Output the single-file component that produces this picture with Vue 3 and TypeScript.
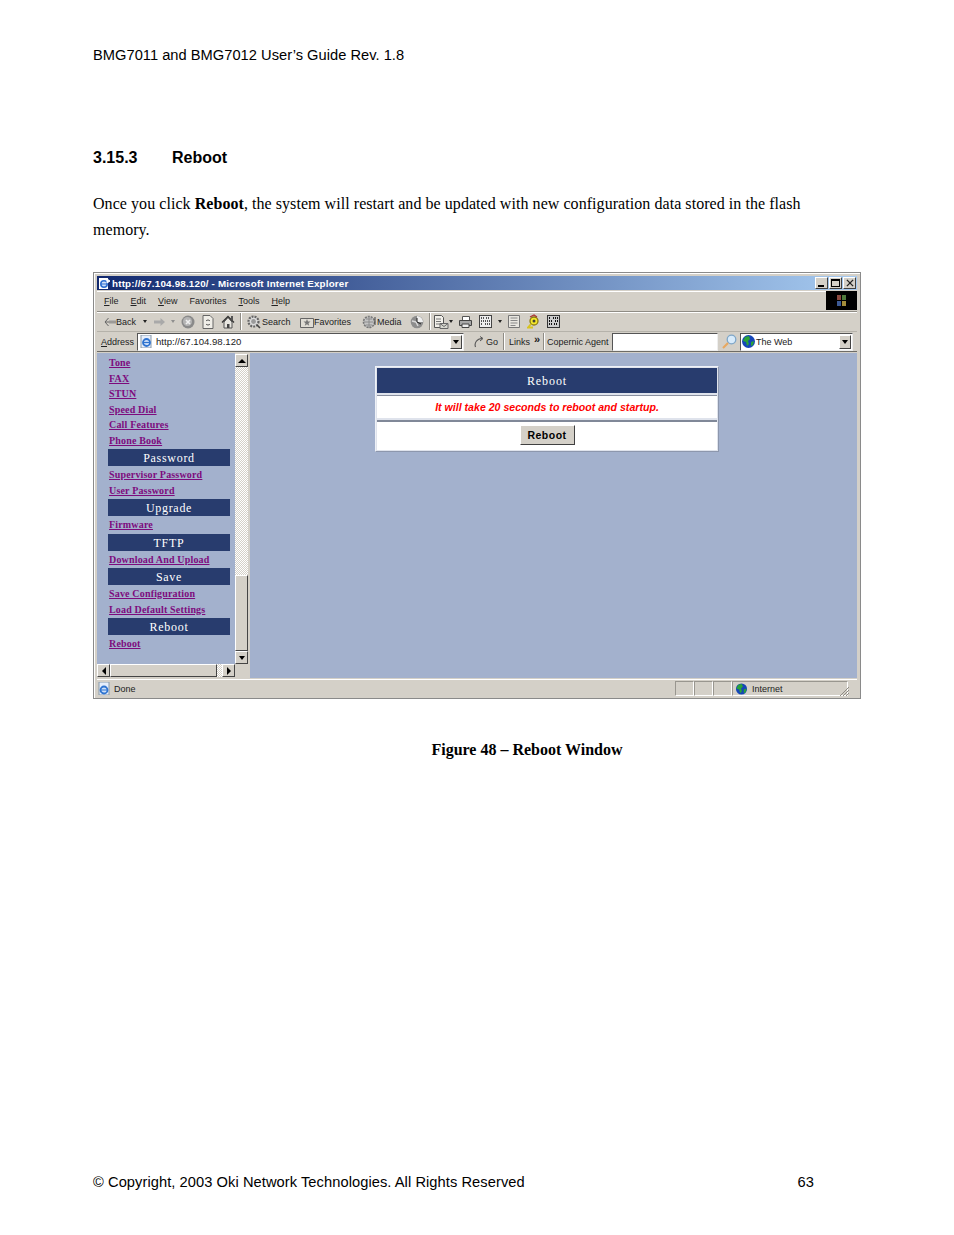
<script setup lang="ts">
interface NavItem { label: string; bar?: boolean }
const nav: NavItem[] = [
  { label: 'Tone' }, { label: 'FAX' }, { label: 'STUN' }, { label: 'Speed Dial' },
  { label: 'Call Features' }, { label: 'Phone Book' }, { label: 'Password', bar: true },
  { label: 'Supervisor Password' }, { label: 'User Password' }, { label: 'Upgrade', bar: true },
  { label: 'Firmware' }, { label: 'TFTP', bar: true }, { label: 'Download And Upload' },
  { label: 'Save', bar: true }, { label: 'Save Configuration' }, { label: 'Load Default Settings' },
  { label: 'Reboot', bar: true }, { label: 'Reboot' }
]
const menus = [
  { k: 'F', r: 'ile' }, { k: 'E', r: 'dit' }, { k: 'V', r: 'iew' },
  { k: '', r: 'Favorites' }, { k: 'T', r: 'ools' }, { k: 'H', r: 'elp' }
]
</script>

<template>
  <div class="page">
    <header class="running">BMG7011 and BMG7012 User’s Guide Rev. 1.8</header>
    <h2 class="heading"><span class="num">3.15.3</span><span>Reboot</span></h2>
    <p class="para">Once you click <b>Reboot</b>, the system will restart and be updated with new configuration data stored in the flash memory.</p>

    <div class="window">
      <div class="title">
        <svg class="t-ico" width="13" height="13" viewBox="0 0 13 13"><rect x="1" y="1" width="9" height="11" fill="#fff"/><circle cx="6" cy="7" r="3.200" fill="#cfe0f8" stroke="#2f6fd0" stroke-width="1.600"/><path d="M3 7h6" stroke="#2f6fd0"/><path d="M9 2l3 2-3 2z" fill="#fff" stroke="#fff"/></svg>
        <span class="t-text">http://67.104.98.120/ - Microsoft Internet Explorer</span>
        <div class="t-btns">
          <span class="wbtn"><i class="w-min"></i></span>
          <span class="wbtn"><i class="w-max"></i></span>
          <span class="wbtn w-x">
            <svg width="8" height="8" viewBox="0 0 9 9"><path d="M1 1l7 7M8 1l-7 7" stroke="#222" stroke-width="1.500"/></svg>
          </span>
        </div>
      </div>

      <div class="menubar">
        <span v-for="m in menus" :key="m.r" class="menu"><u>{{ m.k }}</u>{{ m.r }}</span>
        <div class="flag">
          <svg width="14" height="13" viewBox="0 0 14 13"><rect x="2" y="1" width="4" height="5" fill="#8c4a40"/><rect x="7" y="1" width="4" height="5" fill="#4f7a3c"/><rect x="2" y="7" width="4" height="5" fill="#3c5a95"/><rect x="7" y="7" width="4" height="5" fill="#a48d3a"/></svg>
        </div>
      </div>

      <div class="toolbar">
        <svg class="ti back" width="12" height="10" viewBox="0 0 12 10"><path d="M4.500 1L1 5l3.500 4M1 5h11" fill="none" stroke="#666" stroke-width="1"/><path d="M5 3.800h7M5 6.200h7" stroke="#999" stroke-width=".7"/></svg>
        <span class="tl l-back">Back</span>
        <i class="caret c1"></i>
        <svg class="ti fwd" width="11" height="10" viewBox="0 0 11 10"><path d="M11 5L6.500 1v2.500H0v3h6.500V9z" fill="#a9a9a9"/></svg>
        <i class="caret c2"></i>
        <svg class="ti stop" width="14" height="14" viewBox="0 0 14 14"><circle cx="7" cy="7" r="6.500" fill="#8a8a8a"/><circle cx="6.500" cy="6.500" r="4.500" fill="#b5b5b5"/><path d="M5 5l4 4M9 5l-4 4" stroke="#f0f0f0" stroke-width="1.600"/></svg>
        <svg class="ti refresh" width="12" height="14" viewBox="0 0 12 14"><path d="M1 .5h7l3 3v10H1z" fill="#f0eee8" stroke="#666"/><path d="M4 6a2.500 2.500 0 0 1 4 0M8 9a2.500 2.500 0 0 1-4 0" stroke="#555" fill="none"/></svg>
        <svg class="ti home" width="14" height="14" viewBox="0 0 14 14"><path d="M3 7v6h8V7L7 2.500z" fill="#e8e6e0" stroke="#555"/><path d="M1 7.500l6-6 6 6" fill="none" stroke="#333" stroke-width="1.300"/><rect x="6" y="9" width="2.500" height="4" fill="#444"/><rect x="10" y="1" width="2" height="4" fill="#555"/></svg>
        <i class="sep s1"></i>
        <svg class="ti search" width="14" height="14" viewBox="0 0 14 14"><circle cx="6.500" cy="6.500" r="5" fill="#dcdcdc" stroke="#666" stroke-width="2.200" stroke-dasharray="2 1"/><circle cx="6.500" cy="6.500" r="2.400" fill="#9a9a9a"/><path d="M10 10l3 3" stroke="#444" stroke-width="1.600"/></svg>
        <span class="tl l-search">Search</span>
        <svg class="ti fav" width="14" height="13" viewBox="0 0 14 13"><path d="M.5 3.500h13v9H.5z" fill="#e0ddd5" stroke="#666"/><path d="M7 4l1 2.400 2.500.2-2 1.600.7 2.500L7 9.300l-2.200 1.400.7-2.500-2-1.600L6 6.400z" fill="#777"/></svg>
        <span class="tl l-fav">Favorites</span>
        <svg class="ti media" width="15" height="14" viewBox="0 0 15 14"><circle cx="7" cy="7" r="5.500" fill="#c4c4c4" stroke="#777" stroke-width="1.600" stroke-dasharray="2 1"/><path d="M4 4h6M2 7h9M4 10h6M7 1v12" stroke="#888" stroke-width=".9"/><path d="M13 2v8" stroke="#444"/></svg>
        <span class="tl l-media">Media</span>
        <svg class="ti hist" width="14" height="14" viewBox="0 0 14 14"><circle cx="7" cy="7" r="6.300" fill="#8d8d8d"/><path d="M7 1a6 6 0 0 1 6 6H7z" fill="#f0f0f0"/><path d="M2 6l4 1 2 4" stroke="#d8d8d8" stroke-width="1.500" fill="none"/><path d="M7 3v4l4 2" stroke="#222" fill="none"/></svg>
        <i class="sep s2"></i>
        <svg class="ti mail" width="15" height="14" viewBox="0 0 15 14"><path d="M.5.5h7l2 2v10H.5z" fill="#f2f0ea" stroke="#555"/><path d="M2 4h5M2 6.500h5M2 9h4" stroke="#777"/><path d="M6 8.500h8v5H6z" fill="#d8d8d0" stroke="#666"/><path d="M6 8.500l4 3 4-3" fill="none" stroke="#666"/></svg>
        <i class="caret c3"></i>
        <svg class="ti print" width="13" height="12" viewBox="0 0 13 12"><path d="M3.500.5h7v4h-7z" fill="#fff" stroke="#555"/><path d="M.5 4.500h12v5H.5z" fill="#a8a8a8" stroke="#444"/><path d="M3 8h7v3.500H3z" fill="#eee" stroke="#444"/></svg>
        <svg class="ti edit" width="13" height="13" viewBox="0 0 13 13"><rect x=".5" y=".5" width="12" height="12" fill="#eee" stroke="#444"/><path d="M2 3h3M7 3h4M2 6h9M2 9h2M6 9h5" stroke="#222" stroke-width="1.500" stroke-dasharray="1 1"/></svg>
        <i class="caret c4"></i>
        <svg class="ti disc" width="12" height="13" viewBox="0 0 12 13"><path d="M.5.5h11v12H.5z" fill="#e8e6e0" stroke="#777"/><path d="M2.500 3h7M2.500 5.500h7M2.500 8h7M2.500 10.500h5" stroke="#888"/></svg>
        <svg class="ti gold" width="13" height="15" viewBox="0 0 13 15"><circle cx="7" cy="7" r="4" fill="#f4e82a" stroke="#8a7a10" stroke-width="1.300"/><circle cx="7" cy="7" r="1.500" fill="#443"/><path d="M4 10l-3 3.500h5" stroke="#d8c420" stroke-width="1.800" fill="none"/><path d="M3 3l4-2 3 2" stroke="#a33" stroke-width="1.200" fill="none"/></svg>
        <svg class="ti msn" width="13" height="13" viewBox="0 0 13 13"><rect x=".5" y=".5" width="12" height="12" fill="#ccc" stroke="#333"/><path d="M2 3h2M6 3h5M2 6h4M8 6h3M2 9h3M7 9h4" stroke="#111" stroke-width="2" stroke-dasharray="1 1"/></svg>
      </div>

      <div class="addrbar">
        <span class="tl l-addr"><u>A</u>ddress</span>
        <div class="combo c-addr">
          <svg class="ie" width="13" height="13" viewBox="0 0 13 13"><rect x="1" y="0" width="10" height="13" fill="#e6eefb" stroke="#89a"/><circle cx="6.500" cy="7.500" r="3.500" fill="#cfe0f8" stroke="#2f74d0" stroke-width="1.800"/><path d="M3 7.500h7" stroke="#2f74d0" stroke-width="1.200"/></svg>
          <span class="url">http://67.104.98.120</span>
          <span class="drop"><i class="down"></i></span>
        </div>
        <svg class="ti go" width="11" height="12" viewBox="0 0 11 12"><path d="M1.500 11C0 7 3 2.500 8 2.500" stroke="#555" fill="none" stroke-width="1.100"/><path d="M6 .5l3 2-3 2.500" stroke="#555" fill="none"/></svg>
        <span class="tl l-go">Go</span>
        <i class="sep s3"></i>
        <span class="tl l-links">Links</span>
        <span class="chev">»</span>
        <i class="sep s4"></i>
        <span class="tl l-cop">Copernic Agent</span>
        <div class="c-input"></div>
        <svg class="ti mag" width="15" height="15" viewBox="0 0 15 15"><circle cx="9.500" cy="5.500" r="4.300" fill="#d8ebfb" stroke="#7ea6c8" stroke-width="1.300"/><path d="M6 9l-5 5" stroke="#e8a860" stroke-width="2.200"/></svg>
        <div class="combo c-web">
          <svg class="globe" width="13" height="13" viewBox="0 0 13 13"><circle cx="6.500" cy="6.500" r="6.500" fill="#1546b8"/><path d="M3 2l4-1 1 3-2 2 1 3-2 2-1-4-3-1zM9 7l3-1-1 4-2 1z" fill="#2aa338"/></svg>
          <span class="web">The Web</span>
          <span class="drop"><i class="down"></i></span>
        </div>
      </div>

      <div class="client">
        <aside class="frame">
          <div class="frame-top">
            <nav class="nav">
              <template v-for="(n, i) in nav" :key="i">
                <div v-if="n.bar" class="bar">{{ n.label }}</div>
                <a v-else class="link">{{ n.label }}</a>
              </template>
            </nav>
            <div class="vscroll">
              <span class="sb"><i class="up"></i></span>
              <span class="dither dv"></span>
              <span class="thumb tv"></span>
              <span class="sb"><i class="down"></i></span>
            </div>
          </div>
          <div class="frame-bottom">
            <div class="hscroll">
              <span class="sb"><i class="left"></i></span>
              <span class="thumb th"></span>
              <span class="dither dh"></span>
              <span class="sb"><i class="right"></i></span>
            </div>
            <span class="corner"></span>
          </div>
        </aside>
        <main class="main">
          <div class="panel">
            <div class="p-head cell">Reboot</div>
            <div class="p-msg cell"><em>It will take 20 seconds to reboot and startup.</em></div>
            <div class="p-act cell"><button class="btn" type="button">Reboot</button></div>
          </div>
        </main>
      </div>

      <div class="status">
        <svg class="st-ico" width="13" height="13" viewBox="0 0 13 13"><rect x="1" y="0" width="10" height="13" fill="#e6eefb" stroke="#89a"/><circle cx="6" cy="8" r="3.500" fill="#cfe0f8" stroke="#2f74d0" stroke-width="1.800"/><path d="M3 8h6" stroke="#2f74d0"/></svg>
        <span class="st-done">Done</span>
        <span class="st-cell w1"></span>
        <span class="st-cell w1"></span>
        <span class="st-cell w1"></span>
        <span class="st-zone">
          <svg width="13" height="12" viewBox="0 0 13 13"><circle cx="6.500" cy="6.500" r="6" fill="#1546b8"/><path d="M3 2l4-1 1 3-2 2 1 3-2 2-1-4-3-1zM9 7l3-1-1 4-2 1z" fill="#2aa338"/></svg>
          <span>Internet</span>
        </span>
        <svg class="grip" width="11" height="11" viewBox="0 0 11 11"><path d="M10 1L1 10M10 4l-6 6M10 7l-3 3" stroke="#8d8a83"/></svg>
      </div>
    </div>

    <p class="caption">Figure 48 – Reboot Window</p>

    <footer class="foot"><span>© Copyright, 2003 Oki Network Technologies. All Rights Reserved</span><span>63</span></footer>
  </div>
</template>

<style scoped>
.page { box-sizing: border-box; width: 954px; height: 1235px; padding: 47px 0 44px 93px; display: flex; flex-direction: column; color: #000; font-family: "Liberation Serif", serif; overflow: hidden; }
.running { font: 14.670px/17px "Liberation Sans", sans-serif; letter-spacing: .025px; }
.heading { margin: 85px 0 0; font: bold 16px/18px "Liberation Sans", sans-serif; display: flex; }
.num { width: 79px; }
.para { margin: 24px 0 0; width: 721px; font-size: 16px; line-height: 26px; letter-spacing: .055px; }
.window { box-sizing: border-box; margin-top: 29px; width: 768px; height: 427px; border: 1px solid #8a8a8a; background: #d4d0c8; padding: 3px 3px 1px; box-shadow: inset 1px 1px 0 #fff; display: flex; flex-direction: column; }
.title { height: 14px; flex: none; display: flex; align-items: center; background: linear-gradient(90deg, #12296f, #a6caf0); color: #fff; font: bold 9.300px "DejaVu Sans", sans-serif; }
.t-ico { margin-left: 1px; }
.t-text { margin-left: 1px; font-family: "Liberation Sans", sans-serif; font-size: 9.800px; letter-spacing: .02em; }
.t-btns { margin-left: auto; display: flex; margin-right: 1px; }
.wbtn { box-sizing: border-box; width: 13px; height: 12px; background: #d4d0c8; border: 1px solid; border-color: #fff #404040 #404040 #fff; margin-left: 1px; position: relative; display: flex; align-items: center; justify-content: center; }
.w-min { position: absolute; left: 2px; bottom: 1px; width: 6px; height: 2px; background: #000; }
.w-max { box-sizing: border-box; width: 9px; height: 8px; border: 1px solid #000; border-top-width: 2px; }
.menubar { margin-top: 1px; height: 21px; flex: none; box-sizing: border-box; padding: 0 0 1px 7px; display: flex; align-items: center; border-bottom: 1px solid #8f8c85; box-shadow: inset 0 1px 0 #fff; font: 9px "Liberation Sans", sans-serif; color: #222; }
.menu { margin-right: 12px; }
.flag { margin-left: auto; width: 31px; height: 19px; background: #000; display: flex; align-items: center; justify-content: center; }
.toolbar, .addrbar { flex: none; height: 20px; display: flex; align-items: center; font: 9px "Liberation Sans", sans-serif; color: #222; box-sizing: border-box; }
.toolbar { padding-left: 7px; border-bottom: 1px solid #b5b2aa; box-shadow: inset 0 1px 0 #fff; }
.addrbar { padding-left: 4px; border-bottom: 1px solid #6e6c66; }
.ti { flex: none; }
.tl { flex: none; white-space: nowrap; }
.caret { flex: none; width: 0; height: 0; border: 2.500px solid transparent; border-top: 3px solid #222; border-bottom: 0; }
.sep { flex: none; width: 1px; height: 17px; background: #8f8c85; box-shadow: 1px 0 0 #fff; }
.l-back { width: 20px; }
.c1 { margin-left: 7px; }
.fwd { margin-left: 7px; }
.c2 { margin-left: 6px; border-top-color: #8f8f8f; }
.stop { margin-left: 6px; }
.refresh { margin-left: 7px; }
.home { margin-left: 7px; }
.s1 { margin-left: 5px; }
.search { margin-left: 6px; }
.l-search { margin-left: 1px; width: 29px; }
.fav { margin-left: 9px; }
.l-fav { width: 39px; }
.media { margin-left: 9px; }
.l-media { width: 24px; }
.hist { margin-left: 9px; }
.s2 { margin-left: 5px; }
.mail { margin-left: 4px; }
.c3 { margin-left: 0; }
.print { margin-left: 6px; }
.edit { margin-left: 7px; }
.c4 { margin-left: 6px; }
.disc { margin-left: 6px; }
.gold { margin-left: 7px; }
.msn { margin-left: 7px; }
.l-addr { width: 33px; }
.combo { box-sizing: border-box; flex: none; height: 18px; background: #fff; border: 1px solid; border-color: #555 #eee #eee #555; display: flex; align-items: center; }
.c-addr { margin-left: 3px; width: 327px; }
.ie { margin-left: 2px; }
.url { margin-left: 3px; font-size: 9.600px; }
.drop { margin-left: auto; box-sizing: border-box; width: 12px; height: 14px; margin-right: 1px; background: #d4d0c8; border: 1px solid; border-color: #fff #444 #444 #fff; display: flex; align-items: center; justify-content: center; }
.down { width: 0; height: 0; border: 3px solid transparent; border-top: 4px solid #000; border-bottom: 0; }
.up { width: 0; height: 0; border: 4px solid transparent; border-bottom: 4px solid #000; border-top: 0; }
.left { width: 0; height: 0; border: 4px solid transparent; border-right: 4px solid #000; border-left: 0; }
.right { width: 0; height: 0; border: 4px solid transparent; border-left: 4px solid #000; border-right: 0; }
.go { margin-left: 10px; }
.l-go { margin-left: 1px; width: 14px; }
.s3 { margin-left: 3px; }
.l-links { margin-left: 5px; width: 20px; }
.chev { margin-left: 5px; margin-top: -5px; width: 9px; font-weight: bold; font-size: 11px; }
.s4 { margin-left: 0; }
.l-cop { margin-left: 3px; width: 61px; }
.c-input { box-sizing: border-box; flex: none; margin-left: 4px; width: 106px; height: 18px; background: #fff; border: 1px solid; border-color: #555 #eee #eee #555; }
.mag { margin-left: 4px; }
.c-web { margin-left: 3px; width: 113px; }
.globe { margin-left: 1px; }
.web { margin-left: 1px; }
.client { flex: 1; min-height: 0; display: flex; border-top: 1px solid #d4d0c8; }
.frame { flex: none; width: 151px; display: flex; flex-direction: column; }
.frame-top { flex: 1; min-height: 0; display: flex; }
.nav { flex: none; box-sizing: border-box; width: 138px; background: #a3b1cd; padding: 2px 5px 0 11px; display: flex; flex-direction: column; }
.link { flex: none; height: 15.500px; margin-left: 1px; font: bold 10px/15.500px "Liberation Serif", serif; color: #7d0b7d; text-decoration: underline; white-space: nowrap; letter-spacing: .17px; }
.bar { height: 17px; flex: none; background: #283c6e; color: #fff; font: 12px/18px "Liberation Serif", serif; text-align: center; letter-spacing: .7px; margin: 1px 0; }
.vscroll { flex: none; width: 13px; box-sizing: border-box; padding-top: 1px; background: #d4d0c8; display: flex; flex-direction: column; }
.sb { flex: none; box-sizing: border-box; width: 13px; height: 13px; background: #d4d0c8; border: 1px solid; border-color: #fff #444 #444 #fff; display: flex; align-items: center; justify-content: center; }
.thumb { box-sizing: border-box; background: #d4d0c8; border: 1px solid; border-color: #fff #444 #444 #fff; flex: none; }
.dither { flex: none; background-color: #eee; background-image: repeating-conic-gradient(#d4d0c8 0 25%, #fff 0 50%); background-size: 2px 2px; }
.dv { width: 13px; height: 208px; }
.tv { width: 13px; height: 76px; }
.frame-bottom { flex: none; height: 14px; display: flex; background: #d4d0c8; }
.hscroll { flex: none; width: 138px; display: flex; }
.th { width: 107px; height: 13px; }
.dh { width: 5px; height: 13px; }
.corner { flex: 1; }
.main { flex: 1; min-width: 0; background: #a3b1cd; border-left: 2px solid #d4d0c8; display: flex; padding: 13px 0 0 125px; align-items: flex-start; }
.panel { box-sizing: border-box; width: 344px; height: 86px; background: #dfe3ec; border: 1px solid #eef1f7; border-right-color: #8d97ad; border-bottom-color: #8d97ad; display: flex; flex-direction: column; gap: 2px; padding: 1px; }
.cell { box-sizing: border-box; display: flex; justify-content: center; flex: none; }
.p-head { height: 25px; align-items: center; padding-top: 2px; background: #283c6e; color: #fff; font: 12px "Liberation Serif", serif; letter-spacing: .9px; }
.p-msg { height: 23px; align-items: center; background: #fff; border-top: 1px solid #8a90a0; color: #f00; font: italic bold 10.600px "Liberation Sans", sans-serif; }
.p-act { height: 30px; align-items: flex-start; padding-top: 3px; background: #fff; border-top: 2px solid #808898; }
.btn { box-sizing: border-box; width: 55px; height: 20px; padding: 0; background: #d4d0c8; border: 1px solid; border-color: #fff #404040 #404040 #fff; font: bold 10.500px "Liberation Sans", sans-serif; letter-spacing: .5px; color: #000; }
.status { flex: none; height: 17px; margin-top: 1px; display: flex; align-items: center; font: 9px "Liberation Sans", sans-serif; color: #222; border-top: 1px solid #fff; }
.st-ico { margin-left: 1px; }
.st-done { margin-left: 3px; width: 561px; }
.st-cell { box-sizing: border-box; height: 15px; border: 1px solid; border-color: #99968f #fff #fff #99968f; flex: none; }
.w1 { width: 19px; }
.st-zone { box-sizing: border-box; flex: none; width: 116px; height: 15px; display: flex; align-items: center; gap: 4px; padding-left: 2px; border: 1px solid; border-color: #99968f #fff #fff #99968f; }
.grip { margin-left: -9px; align-self: flex-end; }
.caption { margin: 42px 0 0 50px; width: 768px; text-align: center; font: bold 16px/18px "Liberation Serif", serif; }
.foot { margin-top: auto; width: 721px; display: flex; justify-content: space-between; font: 14.670px/17px "Liberation Sans", sans-serif; letter-spacing: .065px; }
</style>
